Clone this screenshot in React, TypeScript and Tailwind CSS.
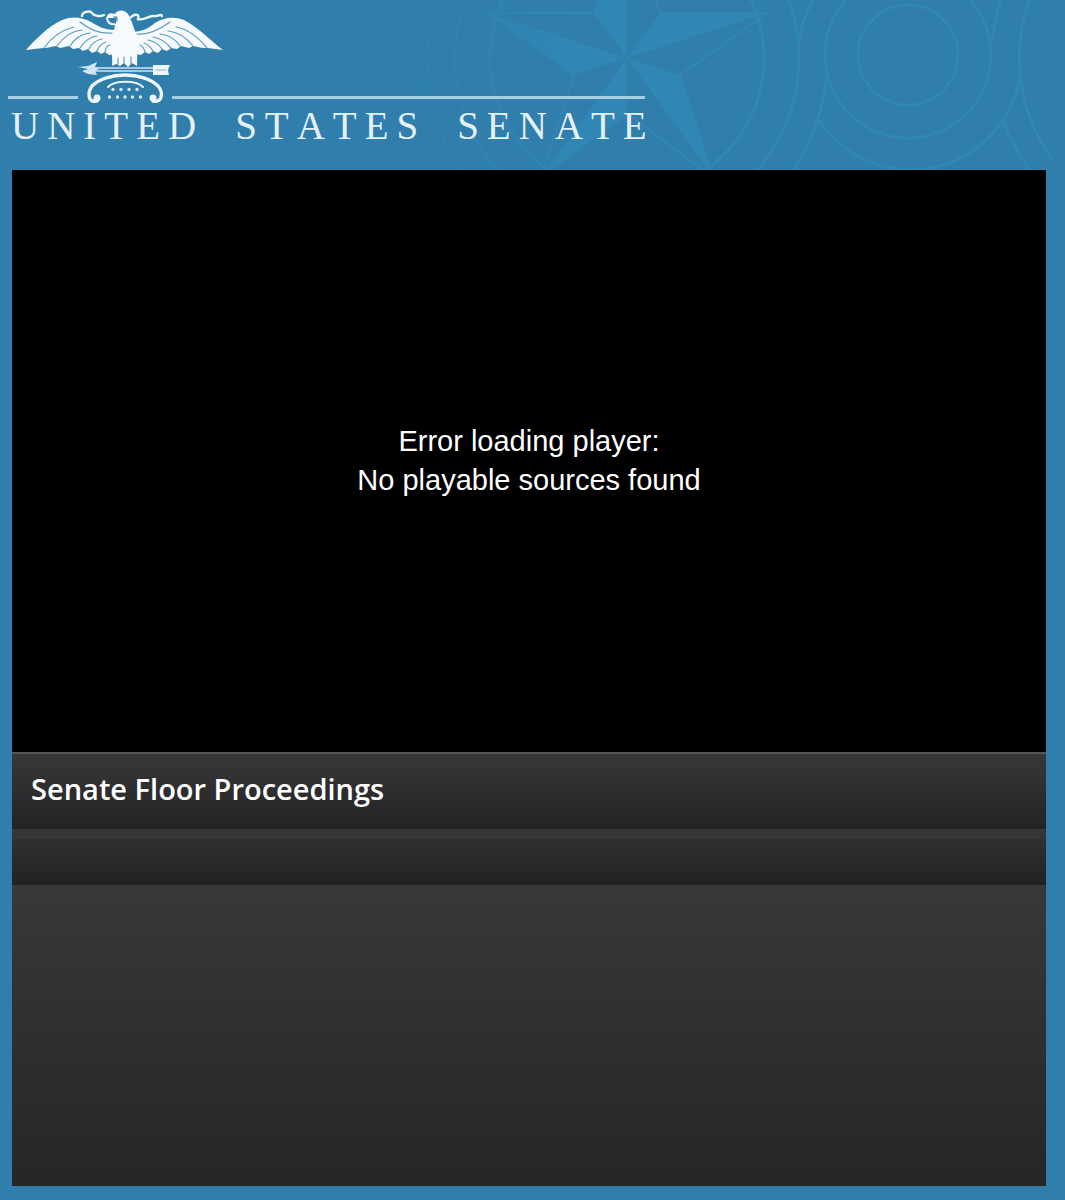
function SealPattern() {
  return (
    <svg
      className="pointer-events-none absolute top-0 left-0 h-[170px] w-[1053px]"
      viewBox="0 0 1053 170"
      fill="none"
      aria-hidden="true"
    >
      <defs>
        <linearGradient id="fade" x1="330" x2="600" y1="0" y2="0" gradientUnits="userSpaceOnUse">
          <stop offset="0" stopColor="#fff" stopOpacity="0" />
          <stop offset="1" stopColor="#fff" />
        </linearGradient>
        <mask id="fadeMask" maskUnits="userSpaceOnUse" x="0" y="0" width="1053" height="170">
          <rect width="1053" height="170" fill="url(#fade)" />
        </mask>
      </defs>
      <g mask="url(#fadeMask)">
        <g fill="#3087b5">
          <path d="M627 58 594 13 627-89Z" />
          <path d="M627 58 660 13H767Z" />
          <path d="M627 58 487 13 574 75Z" />
          <path d="M627 58 680 75 713 177Z" />
          <path d="M627 58V114L541 177Z" />
        </g>
        <g stroke="#3187b4" strokeWidth="3">
          <path d="M627-89 660 13H767L680 75 713 177 627 114 541 177 574 75 487 13H594Z" strokeWidth="2" />
          <circle cx="627" cy="58" r="137" />
          <circle cx="627" cy="58" r="172" />
          <path d="M826 78A200 200 0 0 1 793 170" />
          <path d="M428 78A200 200 0 0 0 461 170" />
          <circle cx="346" cy="55" r="50" />
          <circle cx="346" cy="55" r="83" />
          <circle cx="908" cy="55" r="50" />
          <circle cx="908" cy="55" r="83" />
          <path d="M813 0A110 110 0 0 0 799 42" />
          <path d="M819 120A110 110 0 0 0 1020 75" />
          <path d="M1032-7A172 172 0 0 0 1053 160" />
          <path d="M1001-1A200 200 0 0 0 992 42" />
          <path d="M1002 118A200 200 0 0 0 1030 170" />
        </g>
      </g>
    </svg>
  );
}

function Eagle() {
  return (
    <svg className="h-[106px] w-[240px]" viewBox="0 0 240 106" fill="none" aria-hidden="true">
      <g fill="#f6fafd">
        <path d="M26 50C34 41 48 26 62 20 72 16 82 17 91 22 99 27 106 30 115 30L116 54 109 55 105 52 101 54 97 51 92 53 88 49 83 51 79 48 73 49 69 46 60 48 56 46 46 48 43 48Z" />
        <path d="M223 50C211 41 198 27 184 20 173 16 163 18 155 23 148 29 142 31 134 32L136 54 141 55 145 52 149 54 153 51 158 53 162 49 167 51 171 48 177 49 181 46 189 48 193 46 203 48 208 48Z" />
        <path d="M114 30C115 24 117 21 117 17L113 18 107 18C106 14 111 12 115 14 118 9 125 10 128 14 132 20 133 27 136 33 139 42 137 52 137 66L132 63 128 67 124 63 120 66 116 64 112 66C113 57 111 51 110 45 110 38 112 34 114 30Z" />
      </g>
      <g stroke="#5a9ac2" strokeWidth="1.2" strokeLinecap="round">
        <path d="M44 48C51 38 62 30 74 27M57 46C64 36 72 31 82 30M70 46C75 38 81 34 90 33M80 48C85 40 90 37 97 36M89 49C92 42 97 40 102 39M97 51C99 45 103 43 106 42M105 52C106 47 108 45 110 45" />
        <path d="M80 22C90 30 102 34 112 33" />
        <path d="M207 48C198 37 188 29 176 27M193 46C186 37 178 32 168 31M180 46C175 38 169 35 160 34M171 48C165 41 160 38 153 37M162 49C158 43 153 41 148 40M153 51C150 46 147 44 144 43M145 52C144 48 142 46 140 45" />
        <path d="M170 22C159 30 148 35 137 34" />
        <path d="M118 65V58M124 63V57M131 64V57" />
        <path d="M114 17C116 16 118 18 117 21" />
      </g>
      <path
        d="M82 16C82 12 90 10 92 13 94 16 100 17 104 15M131 17C136 13 140 15 138 19 144 21 148 16 153 16 158 17 161 13 162 16"
        stroke="#eef6fb"
        strokeWidth="2.4"
        strokeLinecap="round"
      />
      <path d="M107 17C107 23 111 25 115 24" stroke="#eef6fb" strokeWidth="2" />
      <g stroke="#cfe3f0" strokeLinecap="round">
        <path d="M95 68 154 68M95 71 154 71" strokeWidth="1.4" />
      </g>
      <path d="M78 67 88 66 97 62 95 67 99 69 95 71 97 75 88 74 82 71 88 69Z" fill="#d3e6f2" />
      <path d="M153 65H170L168 70 169 75H153Z" fill="#edf5fa" />
      <path d="M156 70H166" stroke="#83b4d2" />
      <g stroke="#eef6fb" strokeLinecap="round">
        <path d="M97 101C88 103 87 93 92 86 99 79 112 75 125 75 138 75 151 79 158 86 164 93 162 103 153 101" strokeWidth="3.4" />
        <path d="M108 87C114 80 137 80 143 87" strokeWidth="2" />
      </g>
      <g fill="#eef6fb">
        <circle cx="97" cy="98" r="3.5" />
        <circle cx="153" cy="98" r="3.5" />
      </g>
      <g stroke="#d8e9f4" strokeLinecap="round" strokeWidth="3.4">
        <path d="M113 89.500h0M121 89.500h0M129 89.500h0M137 89.500h0M109.500 97h0M117.500 97h0M125 97h0M132.500 97h0M140.500 97h0" />
      </g>
    </svg>
  );
}

export default function App() {
  return (
    <div className="relative flex min-h-screen flex-col bg-[#2f7eac] pr-[19px] pb-3.5 pl-3">
      <SealPattern />
      <header className="relative -ml-3 h-[170px]">
        <div className="relative flex h-[106px]">
          <Eagle />
          <div className="absolute bottom-[7px] left-2 flex w-[637px] gap-[94px]" aria-hidden="true">
            <div className="h-[3px] w-[70px] bg-[#a8cee4]" />
            <div className="h-[3px] flex-1 bg-[#a8cee4]" />
          </div>
        </div>
        <h1 className="flex gap-[31px] pl-[11px] font-['Liberation_Serif',serif] text-[39px] leading-10 tracking-[8px] text-[#e4f1f8] [font-kerning:none]">
          <span>UNITED</span>
          <span>STATES</span>
          <span>SENATE</span>
        </h1>
      </header>

      <main className="relative flex flex-1 flex-col">
        <section
          className="flex aspect-video flex-col items-center justify-center bg-black text-center font-['Liberation_Sans',sans-serif] text-[29px] leading-[39px] text-white"
          role="alert"
        >
          <p>Error loading player:</p>
          <p>No playable sources found</p>
        </section>
        <div className="flex h-[77px] items-center border-t-2 border-[#555557] bg-linear-to-b from-[#38383a] to-[#232325] pb-1 pl-[19px]">
          <h2 className="font-['Open_Sans',sans-serif] text-[29px] font-semibold text-white">
            Senate Floor Proceedings
          </h2>
        </div>
        <div className="h-14 border-t-10 border-[#363638] bg-linear-to-b from-[#303032] to-[#222224]" />
        <div className="flex-1 bg-linear-to-b from-[#38383a] to-[#262628]" />
      </main>
    </div>
  );
}
